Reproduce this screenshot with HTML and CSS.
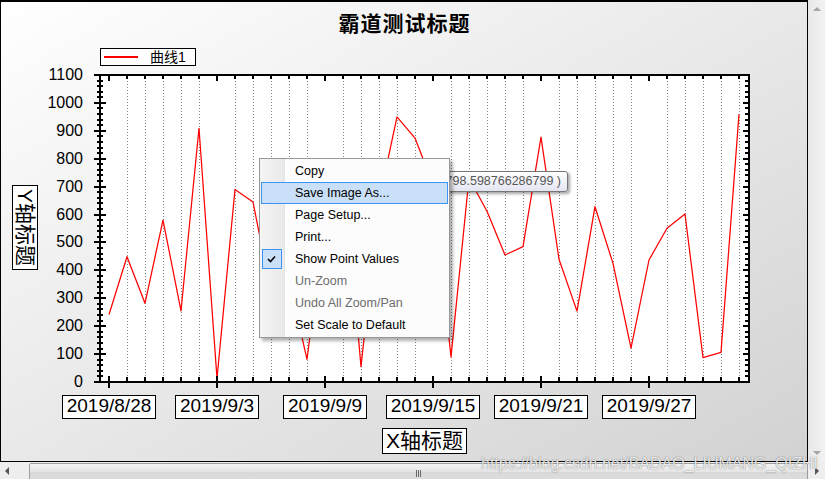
FILE: index.html
```html
<!DOCTYPE html>
<html lang="zh-CN">
<head>
  <meta charset="UTF-8" />
  <meta name="viewport" content="width=device-width, initial-scale=1.0"/>
  <title>ZedGraph 曲线</title>
  <link rel="stylesheet" href="styles.css">
</head>
<body>
  <div class="window">
    <div class="pane">
      <h1 class="title">霸道测试标题</h1>

      <div class="legend">
        <span class="legend-line"></span>
        <span class="legend-text">曲线1</span>
      </div>

      <div class="chart">
        <div class="y-title"><span>Y轴标题</span></div>
        <div class="y-labels">
          <span>1100</span>
          <span>1000</span>
          <span>900</span>
          <span>800</span>
          <span>700</span>
          <span>600</span>
          <span>500</span>
          <span>400</span>
          <span>300</span>
          <span>200</span>
          <span>100</span>
          <span>0</span>
        </div>
        <svg class="plot" id="plot" width="670" height="329" viewBox="88 66 670 329"></svg>
      </div>

      <div class="x-labels">
        <span>2019/8/28</span>
        <span>2019/9/3</span>
        <span>2019/9/9</span>
        <span>2019/9/15</span>
        <span>2019/9/21</span>
        <span>2019/9/27</span>
      </div>

      <div class="x-title-row"><span class="x-title">X轴标题</span></div>

      <div class="tooltip">( 2019/9/10, 798.598766286799 )</div>

      <ul class="menu">
        <li class="item"><span class="check"></span>Copy</li>
        <li class="item active"><span class="check"></span>Save Image As...</li>
        <li class="item"><span class="check"></span>Page Setup...</li>
        <li class="item"><span class="check"></span>Print...</li>
        <li class="item">
          <span class="check on">
            <svg width="18" height="18" viewBox="0 0 18 18"><polyline points="5,9 7.5,11.5 12,6.5" fill="none" stroke="#000" stroke-width="1.6"/></svg>
          </span>Show Point Values
        </li>
        <li class="item disabled"><span class="check"></span>Un-Zoom</li>
        <li class="item disabled"><span class="check"></span>Undo All Zoom/Pan</li>
        <li class="item"><span class="check"></span>Set Scale to Default</li>
      </ul>
    </div>

    <div class="vscroll">
      <span class="arrow up"></span>
      <span class="arrow down"></span>
    </div>

    <div class="hscroll">
      <span class="arrow left"></span>
      <div class="thumb"><span class="grip"></span></div>
      <span class="arrow right"></span>
    </div>

    <div class="watermark">https://blog.csdn.net/BADAO_LIUMANG_QIZHI</div>
  </div>

  <script>
    const data = [242, 449, 282, 580, 255, 909, 13, 690, 645, 318, 365, 81,
                  582, 798.6, 55, 648, 950, 874, 707, 90, 730, 612, 455, 485,
                  877, 440, 254, 628, 425, 121, 437, 551, 602, 87, 106, 960];

    const svg = document.getElementById('plot');
    const NS = 'http://www.w3.org/2000/svg';
    const TOP = 75, BOTTOM = 382, LEFT = 100, RIGHT = 749;

    const yOf = (v) => BOTTOM - v * (BOTTOM - TOP) / 1100;
    const xOf = (i) => 109 + i * 18;

    function add(tag, attrs) {
      const el = document.createElementNS(NS, tag);
      for (const k in attrs) el.setAttribute(k, attrs[k]);
      svg.appendChild(el);
      return el;
    }

    function tick(x1, y1, x2, y2) {
      add('line', { x1, y1, x2, y2, class: 'tick' });
    }

    add('rect', { x: LEFT, y: TOP, width: RIGHT - LEFT, height: BOTTOM - TOP, class: 'plot-bg' });

    // dotted grid on the minor days only
    data.forEach((v, i) => {
      if (i % 6) add('line', { x1: xOf(i) + 0.5, y1: TOP, x2: xOf(i) + 0.5, y2: BOTTOM, class: 'grid' });
    });

    add('polyline', {
      points: data.map((v, i) => xOf(i) + ',' + yOf(v).toFixed(1)).join(' '),
      class: 'curve'
    });

    add('rect', { x: LEFT, y: TOP, width: RIGHT - LEFT, height: BOTTOM - TOP, class: 'frame' });

    // y axis ticks, left and right
    for (let v = 0; v <= 1100; v += 20) {
      const y = Math.round(yOf(v));
      const major = v % 100 === 0;
      tick(major ? 94 : 97, y, major ? 106 : 103, y);
      tick(major ? 743 : 745, y, RIGHT, y);
    }

    // x axis ticks, top and bottom
    for (let i = 0; i < data.length; i++) {
      const x = xOf(i);
      const major = i % 6 === 0;
      tick(x, TOP, x, TOP + (major ? 6 : 4));
      tick(x, major ? 376 : 377, x, major ? 388 : BOTTOM);
    }
  </script>
</body>
</html>
```

FILE: styles.css
```css
* {
  box-sizing: border-box;
}

body {
  margin: 0;
  font-family: "Liberation Sans", Arial, sans-serif;
  background: #fff;
  color: #000;
}

.window {
  position: relative;
  width: 825px;
  height: 479px;
  display: grid;
  grid-template-columns: 808px 17px;
  grid-template-rows: 462px 17px;
  overflow: hidden;
}

/* chart pane */

.pane {
  position: relative;
  display: flex;
  flex-direction: column;
  align-items: flex-start;
  border: 1px solid #000;
  border-top-width: 2px;
  background: linear-gradient(to bottom right, #ffffff, #d2d2d2);
}

.title {
  align-self: stretch;
  margin: 0;
  padding: 8px 0 0 1px;
  font: bold 21px/24px "Noto Sans CJK SC", sans-serif;
  letter-spacing: 1px;
  text-align: center;
}

.legend {
  display: flex;
  align-items: center;
  width: 96px;
  height: 18px;
  margin: 14px 0 0 99px;
  border: 1px solid #000;
  background: #fff;
}

.legend-line {
  width: 34px;
  height: 2px;
  margin-left: 3px;
  background: #f00;
}

.legend-text {
  margin-left: 12px;
  font: 14px/16px "Liberation Sans", "Noto Sans CJK SC", sans-serif;
}

.chart {
  display: flex;
  align-items: flex-start;
  height: 329px;
}

.y-title {
  display: flex;
  align-items: center;
  justify-content: center;
  width: 26px;
  height: 85px;
  margin: 119px 0 0 11px;
  border: 1px solid #000;
  background: #fff;
}

.y-title span {
  writing-mode: vertical-rl;
  text-orientation: sideways;
  font: 21px/22px "Liberation Sans", "Noto Sans CJK SC", sans-serif;
}

.y-labels {
  display: flex;
  flex-direction: column;
  justify-content: space-between;
  align-items: flex-end;
  width: 46px;
  height: 325px;
  padding-right: 1px;
  font-size: 16px;
  line-height: 18px;
}

.plot {
  display: block;
  flex: none;
  margin-left: 4px;
}

.plot-bg {
  fill: #fff;
}

.grid {
  stroke: #808080;
  stroke-width: 1;
  stroke-dasharray: 1 2;
}

.curve {
  fill: none;
  stroke: #f00;
  stroke-width: 1.25;
  stroke-linejoin: round;
}

.frame {
  fill: none;
  stroke: #000;
  stroke-width: 2;
  shape-rendering: crispEdges;
}

.tick {
  stroke: #000;
  stroke-width: 2;
  shape-rendering: crispEdges;
}

.x-labels {
  display: grid;
  grid-template-columns: repeat(6, 108px);
  justify-items: center;
  margin-left: 54px;
}

.x-labels span {
  padding: 0 4px 2px;
  border: 1px solid #000;
  background: #fff;
  font-size: 19px;
  line-height: 20px;
}

.x-title-row {
  display: flex;
  justify-content: center;
  width: 649px;
  margin: 9px 0 0 99px;
}

.x-title {
  padding: 1px 3px;
  border: 1px solid #000;
  background: #fff;
  font: 21px/22px "Liberation Sans", "Noto Sans CJK SC", sans-serif;
}

/* point value tooltip and context menu */

.tooltip {
  position: absolute;
  left: 369px;
  top: 169px;
  width: 198px;
  height: 21px;
  padding-right: 6px;
  border: 1px solid #767676;
  border-radius: 3px;
  background: linear-gradient(#ffffff, #e4e5f0);
  box-shadow: 2px 2px 3px rgba(0, 0, 0, 0.35);
  font-size: 12.5px;
  line-height: 19px;
  color: #575757;
  text-align: right;
  white-space: nowrap;
  overflow: hidden;
}

.menu {
  position: absolute;
  left: 258px;
  top: 156px;
  width: 191px;
  margin: 0;
  padding: 1px 0;
  list-style: none;
  border: 1px solid #979797;
  background: linear-gradient(to right, #f4f4f4, #e9e9e9 24px, #e2e3e3 24px, #e2e3e3 25px, #fff 25px, #fff 26px, #fcfcfc 26px);
  box-shadow: 3px 3px 3px rgba(0, 0, 0, 0.3);
  font-size: 12.5px;
}

.item {
  display: flex;
  align-items: center;
  height: 22px;
  margin: 0 1px;
  border: 1px solid transparent;
  line-height: 20px;
  white-space: nowrap;
}

.item.active {
  border-color: #3d94f0;
  background: #c9e0f8;
}

.item.disabled {
  color: #6d6d6d;
}

.check {
  flex: none;
  width: 20px;
  height: 20px;
  margin-right: 13px;
}

.check.on {
  border: 1px solid #3d94f0;
  background: #c9e0f8;
}

.check svg {
  display: block;
}

/* scrollbars */

.vscroll {
  display: flex;
  flex-direction: column;
  justify-content: space-between;
  align-items: center;
  padding: 7px 0;
  background: linear-gradient(to right, #e8e8e8, #f2f2f2);
}

.hscroll {
  grid-column: 1 / 3;
  display: flex;
  align-items: center;
  background: #eeeeee;
}

.arrow {
  width: 0;
  height: 0;
  border: 4px solid transparent;
}

.arrow.up {
  border-top: 0;
  border-bottom-color: #a5a5a5;
}

.arrow.down {
  border-bottom: 0;
  border-top-color: #a5a5a5;
}

.arrow.left {
  margin-left: 5px;
  border-left: 0;
  border-right-color: #555;
}

.arrow.right {
  margin-left: 7px;
  border-right: 0;
  border-left-color: #555;
}

.thumb {
  display: flex;
  align-items: center;
  justify-content: center;
  align-self: flex-start;
  width: 779px;
  height: 18px;
  margin: 1px 0 0 20px;
  padding-top: 3px;
  border: 1px solid #9e9e9e;
  border-radius: 2px;
  background: linear-gradient(#f4f4f4, #e4e4e4 50%, #d8d8d8 51%, #dedede);
}

.grip {
  width: 5px;
  height: 7px;
  background: repeating-linear-gradient(to right, #6a6a6a 0 1px, transparent 1px 2px);
}

.watermark {
  position: absolute;
  left: 481px;
  top: 455px;
  font-size: 16px;
  line-height: 18px;
  color: rgba(255, 255, 255, 0.85);
  text-shadow: 0 0 1px rgba(0, 0, 0, 0.45), 0 0 2px rgba(0, 0, 0, 0.2);
  white-space: nowrap;
  pointer-events: none;
}
```
